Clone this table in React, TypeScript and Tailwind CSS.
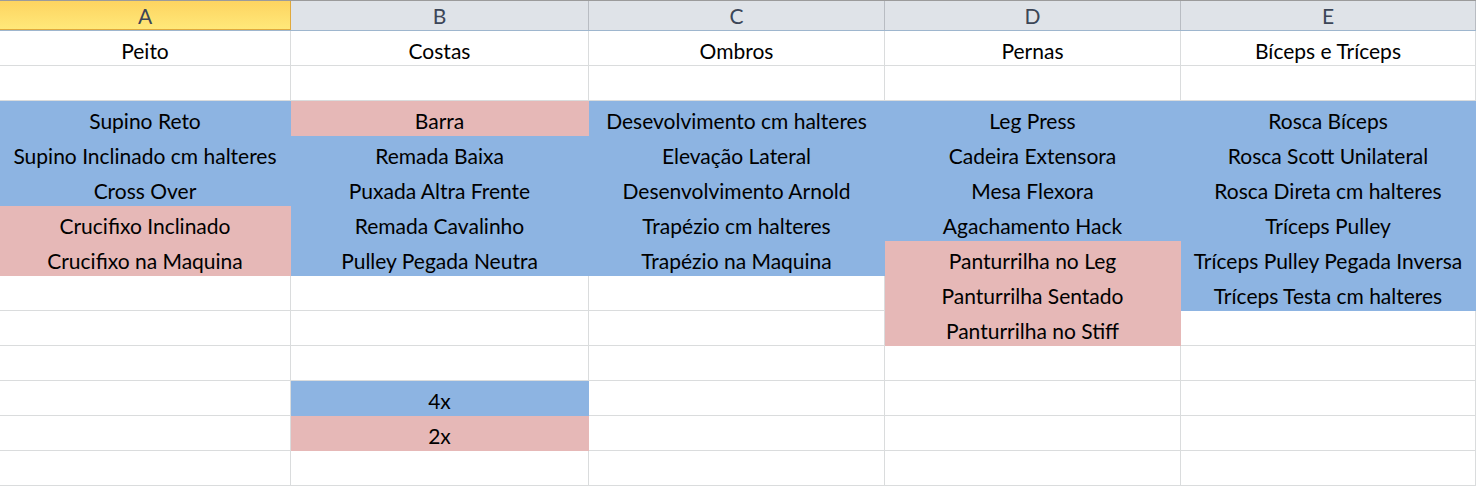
type Fill = 'blue' | 'pink' | null

const COLUMNS = [
  { letter: 'A', width: 'w-[291px]' },
  { letter: 'B', width: 'w-[298px]' },
  { letter: 'C', width: 'w-[296px]' },
  { letter: 'D', width: 'w-[296px]' },
  { letter: 'E', width: 'w-[295px]' },
]

const B = 'blue' as const
const P = 'pink' as const

// each row: [text, fill] per column
const ROWS: [string, Fill][][] = [
  [['Peito', null], ['Costas', null], ['Ombros', null], ['Pernas', null], ['Bíceps e Tríceps', null]],
  [['', null], ['', null], ['', null], ['', null], ['', null]],
  [['Supino Reto', B], ['Barra', P], ['Desevolvimento cm halteres', B], ['Leg Press', B], ['Rosca Bíceps', B]],
  [['Supino Inclinado cm halteres', B], ['Remada Baixa', B], ['Elevação Lateral', B], ['Cadeira Extensora', B], ['Rosca Scott Unilateral', B]],
  [['Cross Over', B], ['Puxada Altra Frente', B], ['Desenvolvimento Arnold', B], ['Mesa Flexora', B], ['Rosca Direta cm halteres', B]],
  [['Crucifixo Inclinado', P], ['Remada Cavalinho', B], ['Trapézio cm halteres', B], ['Agachamento Hack', B], ['Tríceps Pulley', B]],
  [['Crucifixo na Maquina', P], ['Pulley Pegada Neutra', B], ['Trapézio na Maquina', B], ['Panturrilha no Leg', P], ['Tríceps Pulley Pegada Inversa', B]],
  [['', null], ['', null], ['', null], ['Panturrilha Sentado', P], ['Tríceps Testa cm halteres', B]],
  [['', null], ['', null], ['', null], ['Panturrilha no Stiff', P], ['', null]],
  [['', null], ['', null], ['', null], ['', null], ['', null]],
  [['', null], ['4x', B], ['', null], ['', null], ['', null]],
  [['', null], ['2x', P], ['', null], ['', null], ['', null]],
  [['', null], ['', null], ['', null], ['', null], ['', null]],
]

function fillClass(fill: Fill) {
  if (fill === 'blue') return 'bg-[#8db4e2] border-[#8db4e2]'
  if (fill === 'pink') return 'bg-[#e6b8b7] border-[#e6b8b7]'
  return 'bg-white border-[#dadcdd]'
}

export default function App() {
  return (
    <div className="h-[486px] w-[1476px] overflow-hidden bg-white font-['Lato','Liberation_Sans',sans-serif] text-[21px] text-black">
      <div className="flex h-[31px] border-t border-b border-t-[#9b9b9b] border-b-[#9eb6ce] bg-[#dfe3e8]">
        {COLUMNS.map((col, i) => (
          <div
            key={col.letter}
            className={[
              'flex items-center justify-center border-r text-[21px] text-[#3c4657]',
              col.width,
              i === 0
                ? 'border-r-[#e0a93c] bg-gradient-to-b from-[#fdd460] to-[#ffe97a] shadow-[inset_0_-1px_0_#e0a93c]'
                : 'border-r-[#b8bcc2]',
            ].join(' ')}
          >
            {col.letter}
          </div>
        ))}
      </div>

      {ROWS.map((row, r) => (
        <div key={r} className="flex h-[35px]">
          {row.map(([text, fill], c) => (
            <div
              key={c}
              className={[
                'flex items-center justify-center whitespace-nowrap border-r border-b pt-[5px]',
                COLUMNS[c].width,
                fillClass(fill),
              ].join(' ')}
            >
              {text}
            </div>
          ))}
        </div>
      ))}
    </div>
  )
}
